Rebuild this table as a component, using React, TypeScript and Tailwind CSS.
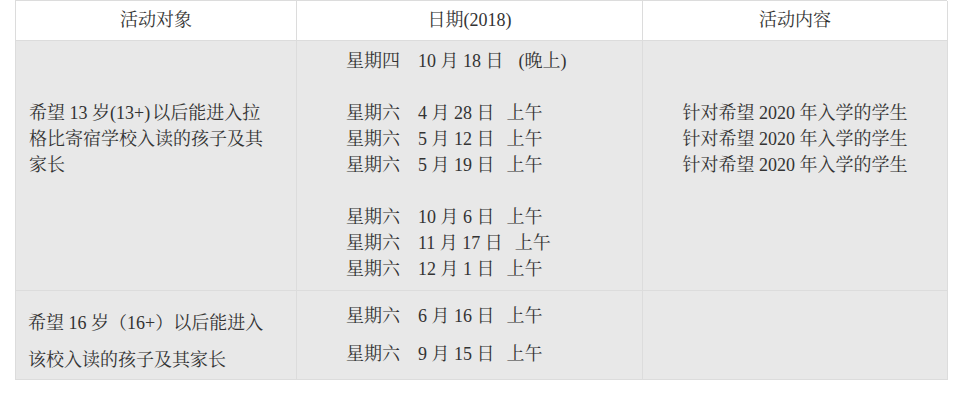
import React from "react";

const font = {
  fontFamily:
    '"Liberation Serif", "Noto Serif CJK SC", "Noto Sans CJK SC", serif',
};

type D = { w: string; d: string; t: string; tm?: string };

function DateLine({ w, d, t, tm }: D) {
  return (
    <div className="whitespace-pre">
      <span>{w}</span>
      <span className="ml-[18px]">{d}</span>
      <span className={tm ?? "ml-[12px]"}>{t}</span>
    </div>
  );
}

const row1: (D | null)[] = [
  { w: "星期四", d: "10 月 18 日", t: "(晚上)", tm: "ml-[15px]" },
  null,
  { w: "星期六", d: "4 月 28 日", t: "上午" },
  { w: "星期六", d: "5 月 12 日", t: "上午" },
  { w: "星期六", d: "5 月 19 日", t: "上午" },
  null,
  { w: "星期六", d: "10 月 6 日", t: "上午" },
  { w: "星期六", d: "11 月 17 日", t: "上午" },
  { w: "星期六", d: "12 月 1 日", t: "上午" },
];

export default function App() {
  return (
    <div className="min-h-[405px] w-[960px] bg-white text-[#333]" style={font}>
      <div className="ml-[15px] grid w-[932px] grid-cols-[281px_346px_305px] border-l border-t border-[#dcdcdc] text-[18px]">
        {/* header */}
        <div className="flex h-[40px] items-center justify-center border-b border-r border-[#dcdcdc] bg-white">
          活动对象
        </div>
        <div className="flex h-[40px] items-center justify-center border-b border-r border-[#dcdcdc] bg-white">
          日期(2018)
        </div>
        <div className="flex h-[40px] items-center justify-center border-b border-r border-[#dcdcdc] bg-white">
          活动内容
        </div>

        {/* row 1 */}
        <div className="border-b border-r border-[#dcdcdc] bg-[#e8e8e8] pl-[13px] pt-[59px] leading-[26px]">
          <div>
            希望 13 岁(13+)<span className="ml-[2px]">以后能进入拉</span>
          </div>
          <div>格比寄宿学校入读的孩子及其</div>
          <div>家长</div>
        </div>
        <div className="border-b border-r border-[#dcdcdc] bg-[#e8e8e8] pb-[8px] pl-[49px] pt-[7px] leading-[26px]">
          {row1.map((r, i) =>
            r ? <DateLine key={i} {...r} /> : <div key={i} className="h-[26px]" />
          )}
        </div>
        <div className="border-b border-r border-[#dcdcdc] bg-[#e8e8e8] pt-[59px] text-center leading-[26px]">
          <div>针对希望 2020 年入学的学生</div>
          <div>针对希望 2020 年入学的学生</div>
          <div>针对希望 2020 年入学的学生</div>
        </div>

        {/* row 2 */}
        <div className="border-b border-r border-[#dcdcdc] bg-[#e8e8e8] pl-[12px] pt-[14px] leading-[37px]">
          <div>希望 16 岁（16+）以后能进入</div>
          <div>该校入读的孩子及其家长</div>
        </div>
        <div className="border-b border-r border-[#dcdcdc] bg-[#e8e8e8] pb-[6px] pl-[49px] pt-[6px] leading-[38px]">
          <DateLine w="星期六" d="6 月 16 日" t="上午" />
          <DateLine w="星期六" d="9 月 15 日" t="上午" />
        </div>
        <div className="border-b border-r border-[#dcdcdc] bg-[#e8e8e8]" />
      </div>
    </div>
  );
}
